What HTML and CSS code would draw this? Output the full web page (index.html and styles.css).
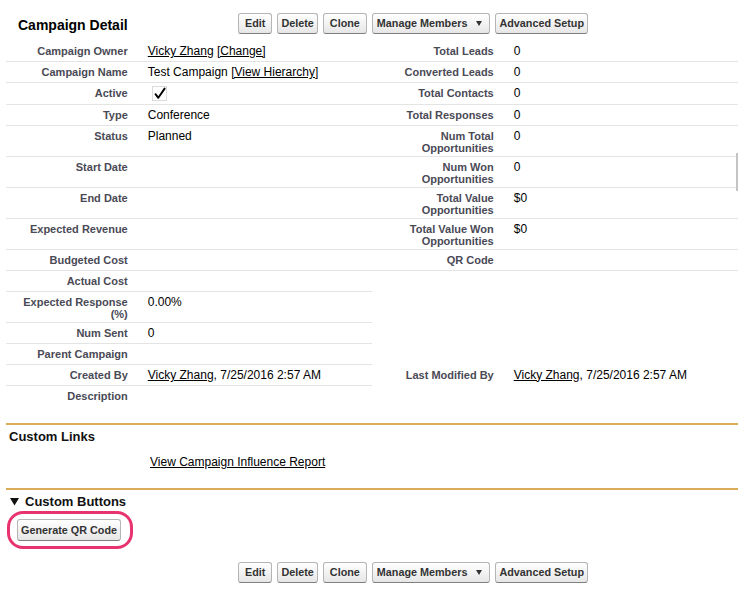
FILE: index.html
```html
<!DOCTYPE html>
<html>
<head>
<meta charset="utf-8">
<link rel="stylesheet" href="styles.css">
</head>
<body>
<div class="page">
  <div class="pb-header">
    <h2 class="pb-title">Campaign Detail</h2>
    <div class="btn-row">
      <button class="btn btn-wide">Edit</button>
      <button class="btn">Delete</button>
      <button class="btn btn-wide">Clone</button>
      <button class="btn btn-menu">Manage Members<span class="caret"></span></button>
      <button class="btn">Advanced Setup</button>
    </div>
  </div>

  <table class="detail">
    <colgroup>
      <col class="c-label"><col class="c-data"><col class="c-label"><col class="c-data">
    </colgroup>
    <tr>
      <td class="label">Campaign Owner</td>
      <td class="data"><a href="#">Vicky Zhang</a> <a href="#">[Change]</a></td>
      <td class="label">Total Leads</td>
      <td class="data">0</td>
    </tr>
    <tr>
      <td class="label">Campaign Name</td>
      <td class="data">Test Campaign <a href="#">[View Hierarchy]</a></td>
      <td class="label">Converted Leads</td>
      <td class="data">0</td>
    </tr>
    <tr>
      <td class="label">Active</td>
      <td class="data"><svg class="check" width="16" height="15" viewBox="0 0 16 15"><rect x="0.5" y="0.5" width="14" height="14" fill="none" stroke="#b8b8b8" stroke-dasharray="1 1"/><path d="M3.5 8.2 L6.3 11.8 L12.6 2.6" fill="none" stroke="#000" stroke-width="1.9" stroke-linecap="round" stroke-linejoin="round"/></svg></td>
      <td class="label">Total Contacts</td>
      <td class="data">0</td>
    </tr>
    <tr>
      <td class="label">Type</td>
      <td class="data">Conference</td>
      <td class="label">Total Responses</td>
      <td class="data">0</td>
    </tr>
    <tr>
      <td class="label">Status</td>
      <td class="data">Planned</td>
      <td class="label">Num Total Opportunities</td>
      <td class="data">0</td>
    </tr>
    <tr>
      <td class="label">Start Date</td>
      <td class="data"></td>
      <td class="label">Num Won Opportunities</td>
      <td class="data">0</td>
    </tr>
    <tr>
      <td class="label">End Date</td>
      <td class="data"></td>
      <td class="label">Total Value Opportunities</td>
      <td class="data">$0</td>
    </tr>
    <tr>
      <td class="label">Expected Revenue</td>
      <td class="data"></td>
      <td class="label">Total Value Won Opportunities</td>
      <td class="data">$0</td>
    </tr>
    <tr>
      <td class="label">Budgeted Cost</td>
      <td class="data"></td>
      <td class="label">QR Code</td>
      <td class="data"></td>
    </tr>
    <tr>
      <td class="label">Actual Cost</td>
      <td class="data"></td>
      <td class="label noline"></td>
      <td class="data noline"></td>
    </tr>
    <tr>
      <td class="label">Expected Response (%)</td>
      <td class="data">0.00%</td>
      <td class="label noline"></td>
      <td class="data noline"></td>
    </tr>
    <tr>
      <td class="label">Num Sent</td>
      <td class="data">0</td>
      <td class="label noline"></td>
      <td class="data noline"></td>
    </tr>
    <tr>
      <td class="label">Parent Campaign</td>
      <td class="data"></td>
      <td class="label noline"></td>
      <td class="data noline"></td>
    </tr>
    <tr>
      <td class="label">Created By</td>
      <td class="data"><a href="#">Vicky Zhang</a>, 7/25/2016 2:57 AM</td>
      <td class="label noline">Last Modified By</td>
      <td class="data noline"><a href="#">Vicky Zhang</a>, 7/25/2016 2:57 AM</td>
    </tr>
    <tr>
      <td class="label noline">Description</td>
      <td class="data noline"></td>
      <td class="label noline"></td>
      <td class="data noline"></td>
    </tr>
  </table>

  <h3 class="sub-head">Custom Links</h3>
  <div class="links"><a href="#">View Campaign Influence Report</a></div>

  <h3 class="sub-head sub-toggle"><svg class="tri" width="10" height="8" viewBox="0 0 10 8"><polygon points="0,0 9,0 4.5,7.5" fill="#111"/></svg>Custom Buttons</h3>
  <div class="highlight">
    <button class="btn btn-qr">Generate QR Code</button>
  </div>

  <div class="pb-bottom">
    <div class="pb-spacer"></div>
    <div class="btn-row">
      <button class="btn btn-wide">Edit</button>
      <button class="btn">Delete</button>
      <button class="btn btn-wide">Clone</button>
      <button class="btn btn-menu">Manage Members<span class="caret"></span></button>
      <button class="btn">Advanced Setup</button>
    </div>
  </div>

  <div class="scroll-hint"></div>
</div>
</body>
</html>
```
FILE: styles.css
```css
body {
  margin: 0;
  background: #fff;
  color: #000;
  font-family: "Liberation Sans", Arial, Helvetica, sans-serif;
  font-size: 12px;
}

.page {
  position: relative;
  padding: 13px 0 0 6px;
}

.pb-header {
  display: flex;
  align-items: center;
  height: 21px;
  margin-bottom: 7px;
}

.pb-title {
  width: 232px;
  flex: none;
  margin: 3px 0 0;
  padding-left: 12px;
  box-sizing: border-box;
  font-size: 14px;
  font-weight: bold;
  line-height: 17px;
}

.btn-row {
  display: flex;
  gap: 5px;
}

.btn {
  height: 21px;
  box-sizing: border-box;
  margin: 0;
  padding: 0 3px;
  border: 1px solid #b5b5b5;
  border-bottom-color: #7f7f7f;
  border-radius: 3px;
  background: linear-gradient(#ffffff, #f0f0f0 60%, #e6e6e6);
  color: #333;
  font-family: "Liberation Sans", Arial, Helvetica, sans-serif;
  font-size: 10.8px;
  font-weight: bold;
  line-height: 19px;
  white-space: nowrap;
}

.btn-wide {
  padding: 0 6px;
}

.btn-menu {
  display: flex;
  align-items: center;
  padding: 0 7px 0 4px;
}

.caret {
  width: 0;
  height: 0;
  margin-left: 9px;
  border-left: 3.5px solid transparent;
  border-right: 3.5px solid transparent;
  border-top: 5px solid #333;
}

.detail {
  width: 732px;
  table-layout: fixed;
  border-collapse: collapse;
}

.c-label { width: 18%; }
.c-data { width: 32%; }

.detail td {
  height: 14px;
  vertical-align: top;
  border-bottom: 1px solid #e4e4e4;
}

.detail td.label {
  padding: 4px 10px 2px 2px;
  text-align: right;
  font-size: 11px;
  font-weight: bold;
  line-height: 12px;
  color: #4a4a56;
}

.detail td.data {
  padding: 3px 2px 3px 10px;
  line-height: 14px;
}

.detail td.noline {
  border-bottom: none;
}

.check {
  display: block;
  margin: 0 0 0 4px;
}

a {
  color: #000;
  text-decoration: underline;
}

.sub-head {
  margin: 17px 0 0;
  padding: 4px 0 4px 3px;
  border-top: 2px solid #dbab58;
  font-size: 13px;
  font-weight: bold;
  line-height: 15px;
  color: #111;
}

.links {
  padding: 7px 0 19px 144px;
  line-height: 14px;
}

.sub-toggle {
  margin-top: 0;
  padding: 4px 0 0 4px;
  display: flex;
  align-items: center;
}

.tri {
  margin-right: 5px;
}

.highlight {
  display: inline-flex;
  margin: 2px 0 0 1px;
  padding: 5px 9px 5px 7px;
  border: 3px solid #e8346e;
  border-radius: 16px;
}

.btn-qr {
  height: 22px;
  padding: 0 3px;
}

.pb-bottom {
  display: flex;
  margin-top: 13px;
  padding-bottom: 6px;
}

.pb-spacer {
  width: 232px;
  flex: none;
}

.scroll-hint {
  position: absolute;
  top: 153px;
  right: 0;
  width: 2px;
  height: 38px;
  background: #c4c4c4;
}
```
